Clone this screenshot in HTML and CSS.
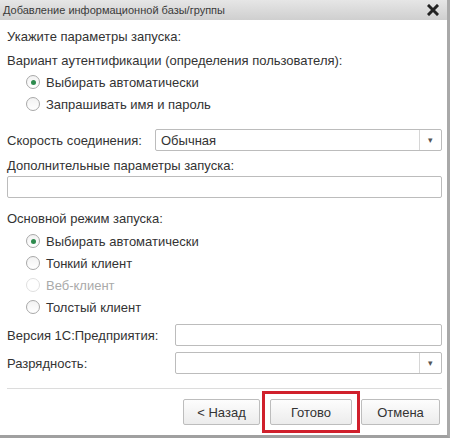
FILE: index.html
```html
<!DOCTYPE html>
<html lang="ru">
<head>
<meta charset="utf-8">
<title>Добавление информационной базы/группы</title>
<link rel="stylesheet" href="styles.css">
</head>
<body>
<div class="dialog">
  <div class="titlebar">
    <span class="title">Добавление информационной базы/группы</span>
    <svg class="close" width="12" height="12" viewBox="0 0 12 12"><path d="M2 2 L10 10 M10 2 L2 10" stroke="#222" stroke-width="3" stroke-linecap="square"/></svg>
  </div>
  <div class="body">
    <div class="heading">Укажите параметры запуска:</div>
    <div class="label">Вариант аутентификации (определения пользователя):</div>
    <div class="radios">
      <div class="radio checked"><span class="dot"></span>Выбирать автоматически</div>
      <div class="radio"><span class="dot"></span>Запрашивать имя и пароль</div>
    </div>
    <div class="row speed">
      <span class="rowlabel">Скорость соединения:</span>
      <div class="field select"><span class="value">Обычная</span><span class="btn">▾</span></div>
    </div>
    <div class="label extra">Дополнительные параметры запуска:</div>
    <div class="field wide"></div>
    <div class="label mode">Основной режим запуска:</div>
    <div class="radios modes">
      <div class="radio checked"><span class="dot"></span>Выбирать автоматически</div>
      <div class="radio"><span class="dot"></span>Тонкий клиент</div>
      <div class="radio disabled"><span class="dot"></span>Веб-клиент</div>
      <div class="radio"><span class="dot"></span>Толстый клиент</div>
    </div>
    <div class="row version">
      <span class="rowlabel">Версия 1С:Предприятия:</span>
      <div class="field"></div>
    </div>
    <div class="row bits">
      <span class="rowlabel">Разрядность:</span>
      <div class="field select"><span class="value"></span><span class="btn">▾</span></div>
    </div>
  </div>
  <div class="footer">
    <button class="button back">&lt; Назад</button>
    <span class="highlight"><button class="button">Готово</button></span>
    <button class="button cancel">Отмена</button>
  </div>
</div>
</body>
</html>
```
FILE: styles.css
```css
html, body {
  margin: 0;
  padding: 0;
  background: #ffffff;
}
body {
  font-family: Arial, "Liberation Sans", sans-serif;
  color: #333333;
  width: 452px;
  height: 440px;
  overflow: hidden;
}
.dialog {
  width: 447px;
  height: 435px;
  border-right: 3px solid #a9a9a9;
  border-bottom: 3px solid #a0a0a0;
  background: #ffffff;
  display: flex;
  flex-direction: column;
}
.titlebar {
  height: 20px;
  background: linear-gradient(#e6e6e6, #cfcfcf);
  display: flex;
  align-items: center;
  justify-content: space-between;
  padding: 0 8px 0 3px;
}
.title {
  font-size: 11px;
  color: #3a3a3a;
}
.close {
  display: block;
}
.body {
  padding: 9px 5px 0 7px;
  font-size: 13px;
  flex: 1;
}
.heading {
  line-height: 16px;
}
.label {
  line-height: 16px;
  margin-top: 8px;
}
.radios {
  padding-left: 19px;
  margin-top: 5px;
  display: flex;
  flex-direction: column;
  gap: 6px;
}
.radio {
  display: flex;
  align-items: center;
  height: 16px;
}
.dot {
  width: 12px;
  height: 12px;
  border: 1px solid #a8a8a8;
  border-radius: 50%;
  margin-right: 6px;
  display: flex;
  align-items: center;
  justify-content: center;
  background: linear-gradient(#f2f2f2, #ffffff);
}
.checked .dot::after {
  content: "";
  width: 5px;
  height: 5px;
  border-radius: 50%;
  background: #2e8b4e;
}
.disabled {
  color: #aaaaaa;
}
.disabled .dot {
  border-color: #e0e0e0;
  background: #ffffff;
}
.row {
  display: flex;
  align-items: center;
}
.rowlabel {
  flex: none;
}
.speed {
  margin-top: 17px;
}
.speed .rowlabel {
  width: 148px;
}
.field {
  flex: 1;
  border: 1px solid #bcbcbc;
  border-radius: 2px;
  background: #fff;
  display: flex;
  align-items: center;
  box-sizing: border-box;
  height: 22px;
}
.field .value {
  flex: 1;
  padding-left: 5px;
}
.field .btn {
  width: 21px;
  align-self: stretch;
  border-left: 1px solid #d6d6d6;
  display: flex;
  align-items: center;
  justify-content: center;
  font-size: 9px;
  color: #555;
}
.extra {
  margin-top: 7px;
}
.wide {
  margin-top: 2px;
}
.mode {
  margin-top: 13px;
}
.modes {
  margin-top: 6px;
}
.version {
  margin-top: 9px;
}
.version .rowlabel, .bits .rowlabel {
  width: 168px;
}
.bits {
  margin-top: 6px;
}
.footer {
  margin: 0 5px 0 7px;
  padding-right: 2px;
  border-top: 1px solid #dcdcdc;
  height: 46px;
  display: flex;
  align-items: center;
  justify-content: flex-end;
}
.button {
  font-family: Arial, "Liberation Sans", sans-serif;
  font-size: 13px;
  color: #333;
  background: linear-gradient(#fdfdfd, #ececec);
  border: 1px solid #bdbdbd;
  border-radius: 2px;
  height: 26px;
  width: 82px;
  padding: 0;
}
.back {
  width: 77px;
  margin-right: 2px;
}
.cancel {
  width: 79px;
  margin-left: 1px;
}
.highlight {
  border: 3px solid #d0202c;
  padding: 5px;
  display: flex;
}
```
